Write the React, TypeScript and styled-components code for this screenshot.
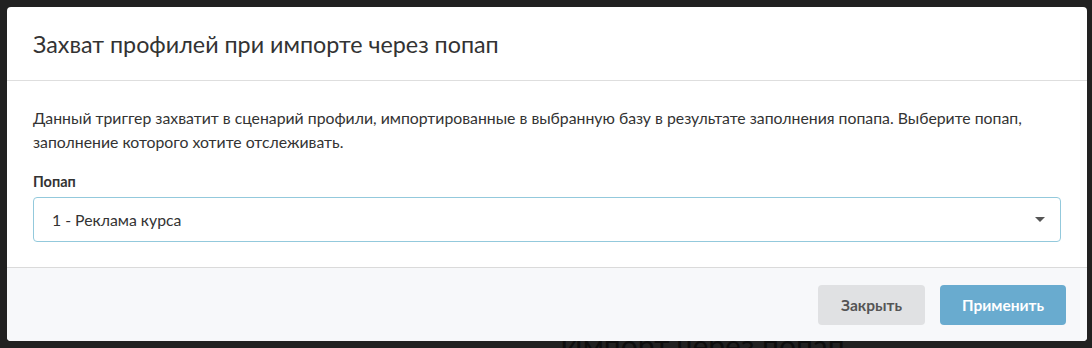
import React from 'react'
import styled, { createGlobalStyle } from 'styled-components'

const GlobalStyle = createGlobalStyle`
  html, body {
    margin: 0;
    padding: 0;
    background: #212121;
    font-family: Lato, 'Noto Sans', sans-serif;
  }
`

const Page = styled.div`
  width: 1092px;
  height: 348px;
  overflow: hidden;
  position: relative;
  background: #212121;
`

// page content behind the dialog, mostly hidden
const PageHeading = styled.h1`
  position: absolute;
  left: 560px;
  top: 327px;
  margin: 0;
  font-size: 30px;
  font-weight: 400;
  color: #0d0d0d;
  white-space: nowrap;
`

const Modal = styled.div`
  position: absolute;
  left: 7px;
  top: 7px;
  width: 1080px;
  height: 334px;
  background: #fff;
  border-radius: 4px;
  display: flex;
  flex-direction: column;
  overflow: hidden;
`

const Header = styled.div`
  height: 74px;
  box-sizing: border-box;
  padding: 0 26px;
  display: flex;
  align-items: center;
  border-bottom: 1px solid #dedede;
`

const Title = styled.h2`
  margin: 0;
  font-size: 23.3px;
  font-weight: 400;
  color: #333;
`

const Body = styled.div`
  flex: 1;
  padding: 25px 26px 0;
  border-bottom: 1px solid #dadada;
`

const Text = styled.p`
  margin: 0 0 19px;
  font-size: 15.8px;
  line-height: 24px;
  color: #333;
`

const Label = styled.div`
  font-size: 14.5px;
  line-height: 18px;
  font-weight: 700;
  color: #333;
  margin-bottom: 6px;
`

const Select = styled.div`
  height: 45px;
  box-sizing: border-box;
  border: 1px solid #93c9dc;
  border-radius: 4px;
  display: flex;
  align-items: center;
  justify-content: space-between;
  padding: 0 15px 0 18px;
  font-size: 15.8px;
  color: #333;
`

const Caret = styled.span`
  width: 0;
  height: 0;
  border-left: 5px solid transparent;
  border-right: 5px solid transparent;
  border-top: 5px solid #555;
`

const Footer = styled.div`
  height: 73px;
  box-sizing: border-box;
  background: #f7f8fa;
  display: flex;
  align-items: center;
  justify-content: flex-end;
  gap: 15px;
  padding: 0 21px 0 26px;
`

const Button = styled.button<{ $primary?: boolean }>`
  height: 40px;
  border: none;
  border-radius: 4px;
  font-family: inherit;
  font-size: 15.5px;
  font-weight: 700;
  cursor: pointer;
  background: ${p => (p.$primary ? '#69abcf' : '#e0e1e3')};
  color: ${p => (p.$primary ? '#fff' : '#555')};
  width: ${p => (p.$primary ? '126px' : '107px')};
`

export default function App () {
  return (
    <>
      <GlobalStyle />
      <Page>
        <PageHeading>Импорт через попап</PageHeading>
        <Modal>
          <Header>
            <Title>Захват профилей при импорте через попап</Title>
          </Header>
          <Body>
            <Text>
              Данный триггер захватит в сценарий профили, импортированные в выбранную базу в результате
              заполнения попапа. Выберите попап, заполнение которого хотите отслеживать.
            </Text>
            <Label>Попап</Label>
            <Select>
              <span>1 - Реклама курса</span>
              <Caret />
            </Select>
          </Body>
          <Footer>
            <Button>Закрыть</Button>
            <Button $primary>Применить</Button>
          </Footer>
        </Modal>
      </Page>
    </>
  )
}
